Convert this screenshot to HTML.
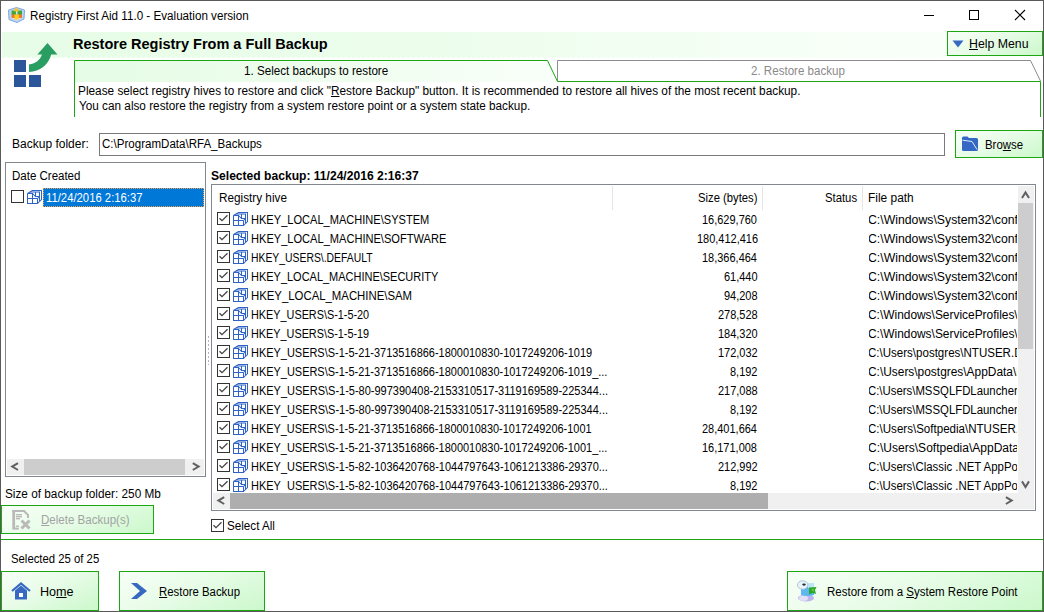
<!DOCTYPE html><html><head><meta charset="utf-8"><style>body{margin:0;width:1044px;height:612px;overflow:hidden;background:#fff;position:relative;font-family:"Liberation Sans",sans-serif}u{text-decoration:underline}</style></head><body><div style="position:absolute;left:0;top:0;width:1042px;height:610px;border:1px solid #5A5A5A"></div><svg style="position:absolute;left:8px;top:7px" width="17" height="16" viewBox="0 0 17 16">
<path d="M8.5,0.5 L16.5,3 L16,12 L9,15.5 L1,12.5 L0.5,3 Z" fill="#BBD4F4" stroke="#7FA6E0" stroke-width="1"/>
<path d="M3,4 L8.5,2 L14,4 L13.5,11 L9,13.5 L3.5,11 Z" fill="#D6E6FA"/>
<rect x="3.5" y="3.5" width="4.5" height="4.5" fill="#3FA63A"/><rect x="9.5" y="3.5" width="4.5" height="4.5" fill="#3FA63A"/>
<rect x="6.5" y="1.5" width="4" height="3" fill="#F7C22A"/>
<rect x="3.5" y="7.5" width="10.5" height="3.5" fill="#F0782A"/>
<rect x="6.5" y="7.5" width="4.5" height="5" fill="#FFCC22"/></svg><div style="position:absolute;left:924px;top:15px;width:10px;height:1px;background:#000;"></div><div style="position:absolute;left:969px;top:10px;width:8px;height:8px;border:1px solid #000"></div><svg style="position:absolute;left:1014px;top:9px" width="12" height="12" viewBox="0 0 12 12"><path d="M1,1 L11,11 M11,1 L1,11" stroke="#000" stroke-width="1.1"/></svg><div style="position:absolute;left:2px;top:32px;width:1041px;height:25px;background:linear-gradient(90deg,#E7FDE7 0%,#ECFDEC 40%,#F6FFF6 75%,#FBFFFB 100%);"></div><div style="position:absolute;left:2px;top:57px;width:1041px;height:1px;background:repeating-linear-gradient(90deg,rgba(255,255,255,0) 0 3px,#fff 3px 5px),linear-gradient(90deg,#E7FDE7 0%,#ECFDEC 40%,#F6FFF6 75%,#FBFFFB 100%);"></div><svg style="position:absolute;left:0;top:30px" width="70" height="70" viewBox="0 30 70 70">
<rect x="14" y="60" width="12" height="12" fill="#2B579A"/><rect x="14" y="75" width="12" height="12" fill="#2B579A"/><rect x="29" y="75" width="12" height="12" fill="#2B579A"/>
<path d="M29,64.4 C35,64 40,60.5 42,54.6 L37.4,54.6 L47.5,43 L57.5,54.6 L51.2,54.6 C48.5,65 40,71.5 29,72 Z" fill="#2A9E62"/></svg><div style="position:absolute;left:947px;top:31px;width:94px;height:23px;border:1px solid #1CA712;background:linear-gradient(155deg,#F7FFF7 0%,#E8FCE8 45%,#CBF8CB 100%);"></div><svg style="position:absolute;left:952px;top:40px" width="12" height="8" viewBox="0 0 12 8"><path d="M0.5,0.5 L11.5,0.5 L6,7.5 Z" fill="#3869C2"/></svg><svg style="position:absolute;left:0;top:0" width="600" height="90" viewBox="0 0 600 90"><defs><linearGradient id="tg" x1="75" y1="0" x2="557" y2="0" gradientUnits="userSpaceOnUse"><stop offset="0" stop-color="#E5FCE5"/><stop offset="0.5" stop-color="#EEFDEE"/><stop offset="1" stop-color="#F9FFF9"/></linearGradient></defs><path d="M75,61 H547.5 L557.5,82 H75 Z" fill="url(#tg)"/></svg><svg style="position:absolute;left:0;top:0" width="1044" height="130" viewBox="0 0 1044 130">
<path d="M557.5,81 V60.5 H1030.5 L1040.5,81" fill="none" stroke="#8C8C8C" stroke-width="1"/>
<path d="M74.5,117 V60.5 H547.5 L557.5,81.5 H1040.5 V117" fill="none" stroke="#1CA712" stroke-width="1"/></svg><div style="position:absolute;left:99px;top:133px;width:844px;height:21px;border:1px solid #7A7A7A;background:#fff;"></div><div style="position:absolute;left:955px;top:130px;width:86px;height:26px;border:1px solid #1CA712;background:linear-gradient(155deg,#F7FFF7 0%,#E8FCE8 45%,#CBF8CB 100%);"></div><svg style="position:absolute;left:961px;top:136px" width="18" height="16" viewBox="0 0 18 16">
<path d="M1,2 Q1,0.5 2.5,0.5 L6.5,0.5 L8,2 L15.5,2 Q17,2 17,3.5 L17,13.5 Q17,15 15.5,15 L2.5,15 Q1,15 1,13.5 Z" fill="#3568C4"/>
<path d="M1.5,4.2 L11,5.5 L16,13.5" fill="none" stroke="#DDE8F8" stroke-width="1"/></svg><div style="position:absolute;left:5px;top:162px;width:199px;height:313px;border:1px solid #828790;background:#fff;"></div><div style="position:absolute;left:11px;top:190px;width:11px;height:11px;border:1px solid #333;background:#fff"></div><svg style="position:absolute;left:27px;top:190px" width="16" height="15" viewBox="0 0 16 15"><g fill="none" stroke="#2E62C4" stroke-width="1.05">
<path d="M0.5,3.5 V13.5 H10.5 V8.5 M0.5,3.5 H5.5 V13.5 M0.5,8.5 H10.5 M0.5,3.5 L5.5,0.5 H14.5 V9.5 L10.5,13.5"/>
<path d="M3.2,2 H12.5 V11 M8.5,2 V6.5 H13 M5.5,3.5 L8.5,6.5 M10.5,8.5 L12.5,6.5"/></g></svg><div style="position:absolute;left:43px;top:188px;width:161px;height:19px;background:#0078D7;"></div><div style="position:absolute;left:43px;top:188px;width:159px;height:17px;border:1px dotted #F5A04A"></div><div style="position:absolute;left:7px;top:459px;width:197px;height:16px;background:#F0F0F0;"></div><div style="position:absolute;left:24px;top:459px;width:161px;height:16px;background:#CDCDCD;"></div><div style="position:absolute;left:211px;top:184px;width:823px;height:325px;border:1px solid #828790;background:#fff;"></div><div style="position:absolute;left:612px;top:186px;width:1px;height:24px;background:#E5E5E5;"></div><div style="position:absolute;left:762px;top:186px;width:1px;height:24px;background:#E5E5E5;"></div><div style="position:absolute;left:862px;top:186px;width:1px;height:24px;background:#E5E5E5;"></div><div style="position:absolute;left:1018px;top:186px;width:16px;height:307px;background:#F0F0F0;"></div><div style="position:absolute;left:1018px;top:203px;width:15px;height:146px;background:#CDCDCD;"></div><div style="position:absolute;left:213px;top:493px;width:821px;height:16px;background:#F0F0F0;"></div><div style="position:absolute;left:230px;top:493px;width:538px;height:16px;background:#AEAEAE;"></div><svg style="position:absolute;left:0;top:0" width="1044" height="612" viewBox="0 0 1044 612"><g fill="none" stroke="#606060" stroke-width="2" stroke-linejoin="miter">
<path d="M18,463.2 L12.2,466.6 L18,470"/><path d="M192.8,463.2 L198.6,466.6 L192.8,470"/>
<path d="M224.2,497.2 L218.4,500.6 L224.2,504"/><path d="M1005.9,497.2 L1011.7,500.6 L1005.9,504"/>
<path d="M1022,198 L1025.5,192.4 L1029,198"/><path d="M1022,481.4 L1025.5,487 L1029,481.4"/></g></svg><div style="position:absolute;left:217px;top:212px;width:11px;height:11px;border:1px solid #333;background:#fff"></div><svg style="position:absolute;left:217px;top:212px" width="13" height="13" viewBox="0 0 13 13"><path d="M2.5,6.2 L5,8.7 L10.5,3.2" fill="none" stroke="#444" stroke-width="1.3"/></svg><svg style="position:absolute;left:233px;top:212px" width="16" height="15" viewBox="0 0 16 15"><g fill="none" stroke="#2E62C4" stroke-width="1.05">
<path d="M0.5,3.5 V13.5 H10.5 V8.5 M0.5,3.5 H5.5 V13.5 M0.5,8.5 H10.5 M0.5,3.5 L5.5,0.5 H14.5 V9.5 L10.5,13.5"/>
<path d="M3.2,2 H12.5 V11 M8.5,2 V6.5 H13 M5.5,3.5 L8.5,6.5 M10.5,8.5 L12.5,6.5"/></g></svg><div style="position:absolute;left:217px;top:231px;width:11px;height:11px;border:1px solid #333;background:#fff"></div><svg style="position:absolute;left:217px;top:231px" width="13" height="13" viewBox="0 0 13 13"><path d="M2.5,6.2 L5,8.7 L10.5,3.2" fill="none" stroke="#444" stroke-width="1.3"/></svg><svg style="position:absolute;left:233px;top:231px" width="16" height="15" viewBox="0 0 16 15"><g fill="none" stroke="#2E62C4" stroke-width="1.05">
<path d="M0.5,3.5 V13.5 H10.5 V8.5 M0.5,3.5 H5.5 V13.5 M0.5,8.5 H10.5 M0.5,3.5 L5.5,0.5 H14.5 V9.5 L10.5,13.5"/>
<path d="M3.2,2 H12.5 V11 M8.5,2 V6.5 H13 M5.5,3.5 L8.5,6.5 M10.5,8.5 L12.5,6.5"/></g></svg><div style="position:absolute;left:217px;top:250px;width:11px;height:11px;border:1px solid #333;background:#fff"></div><svg style="position:absolute;left:217px;top:250px" width="13" height="13" viewBox="0 0 13 13"><path d="M2.5,6.2 L5,8.7 L10.5,3.2" fill="none" stroke="#444" stroke-width="1.3"/></svg><svg style="position:absolute;left:233px;top:250px" width="16" height="15" viewBox="0 0 16 15"><g fill="none" stroke="#2E62C4" stroke-width="1.05">
<path d="M0.5,3.5 V13.5 H10.5 V8.5 M0.5,3.5 H5.5 V13.5 M0.5,8.5 H10.5 M0.5,3.5 L5.5,0.5 H14.5 V9.5 L10.5,13.5"/>
<path d="M3.2,2 H12.5 V11 M8.5,2 V6.5 H13 M5.5,3.5 L8.5,6.5 M10.5,8.5 L12.5,6.5"/></g></svg><div style="position:absolute;left:217px;top:269px;width:11px;height:11px;border:1px solid #333;background:#fff"></div><svg style="position:absolute;left:217px;top:269px" width="13" height="13" viewBox="0 0 13 13"><path d="M2.5,6.2 L5,8.7 L10.5,3.2" fill="none" stroke="#444" stroke-width="1.3"/></svg><svg style="position:absolute;left:233px;top:269px" width="16" height="15" viewBox="0 0 16 15"><g fill="none" stroke="#2E62C4" stroke-width="1.05">
<path d="M0.5,3.5 V13.5 H10.5 V8.5 M0.5,3.5 H5.5 V13.5 M0.5,8.5 H10.5 M0.5,3.5 L5.5,0.5 H14.5 V9.5 L10.5,13.5"/>
<path d="M3.2,2 H12.5 V11 M8.5,2 V6.5 H13 M5.5,3.5 L8.5,6.5 M10.5,8.5 L12.5,6.5"/></g></svg><div style="position:absolute;left:217px;top:288px;width:11px;height:11px;border:1px solid #333;background:#fff"></div><svg style="position:absolute;left:217px;top:288px" width="13" height="13" viewBox="0 0 13 13"><path d="M2.5,6.2 L5,8.7 L10.5,3.2" fill="none" stroke="#444" stroke-width="1.3"/></svg><svg style="position:absolute;left:233px;top:288px" width="16" height="15" viewBox="0 0 16 15"><g fill="none" stroke="#2E62C4" stroke-width="1.05">
<path d="M0.5,3.5 V13.5 H10.5 V8.5 M0.5,3.5 H5.5 V13.5 M0.5,8.5 H10.5 M0.5,3.5 L5.5,0.5 H14.5 V9.5 L10.5,13.5"/>
<path d="M3.2,2 H12.5 V11 M8.5,2 V6.5 H13 M5.5,3.5 L8.5,6.5 M10.5,8.5 L12.5,6.5"/></g></svg><div style="position:absolute;left:217px;top:307px;width:11px;height:11px;border:1px solid #333;background:#fff"></div><svg style="position:absolute;left:217px;top:307px" width="13" height="13" viewBox="0 0 13 13"><path d="M2.5,6.2 L5,8.7 L10.5,3.2" fill="none" stroke="#444" stroke-width="1.3"/></svg><svg style="position:absolute;left:233px;top:307px" width="16" height="15" viewBox="0 0 16 15"><g fill="none" stroke="#2E62C4" stroke-width="1.05">
<path d="M0.5,3.5 V13.5 H10.5 V8.5 M0.5,3.5 H5.5 V13.5 M0.5,8.5 H10.5 M0.5,3.5 L5.5,0.5 H14.5 V9.5 L10.5,13.5"/>
<path d="M3.2,2 H12.5 V11 M8.5,2 V6.5 H13 M5.5,3.5 L8.5,6.5 M10.5,8.5 L12.5,6.5"/></g></svg><div style="position:absolute;left:217px;top:326px;width:11px;height:11px;border:1px solid #333;background:#fff"></div><svg style="position:absolute;left:217px;top:326px" width="13" height="13" viewBox="0 0 13 13"><path d="M2.5,6.2 L5,8.7 L10.5,3.2" fill="none" stroke="#444" stroke-width="1.3"/></svg><svg style="position:absolute;left:233px;top:326px" width="16" height="15" viewBox="0 0 16 15"><g fill="none" stroke="#2E62C4" stroke-width="1.05">
<path d="M0.5,3.5 V13.5 H10.5 V8.5 M0.5,3.5 H5.5 V13.5 M0.5,8.5 H10.5 M0.5,3.5 L5.5,0.5 H14.5 V9.5 L10.5,13.5"/>
<path d="M3.2,2 H12.5 V11 M8.5,2 V6.5 H13 M5.5,3.5 L8.5,6.5 M10.5,8.5 L12.5,6.5"/></g></svg><div style="position:absolute;left:217px;top:345px;width:11px;height:11px;border:1px solid #333;background:#fff"></div><svg style="position:absolute;left:217px;top:345px" width="13" height="13" viewBox="0 0 13 13"><path d="M2.5,6.2 L5,8.7 L10.5,3.2" fill="none" stroke="#444" stroke-width="1.3"/></svg><svg style="position:absolute;left:233px;top:345px" width="16" height="15" viewBox="0 0 16 15"><g fill="none" stroke="#2E62C4" stroke-width="1.05">
<path d="M0.5,3.5 V13.5 H10.5 V8.5 M0.5,3.5 H5.5 V13.5 M0.5,8.5 H10.5 M0.5,3.5 L5.5,0.5 H14.5 V9.5 L10.5,13.5"/>
<path d="M3.2,2 H12.5 V11 M8.5,2 V6.5 H13 M5.5,3.5 L8.5,6.5 M10.5,8.5 L12.5,6.5"/></g></svg><div style="position:absolute;left:217px;top:364px;width:11px;height:11px;border:1px solid #333;background:#fff"></div><svg style="position:absolute;left:217px;top:364px" width="13" height="13" viewBox="0 0 13 13"><path d="M2.5,6.2 L5,8.7 L10.5,3.2" fill="none" stroke="#444" stroke-width="1.3"/></svg><svg style="position:absolute;left:233px;top:364px" width="16" height="15" viewBox="0 0 16 15"><g fill="none" stroke="#2E62C4" stroke-width="1.05">
<path d="M0.5,3.5 V13.5 H10.5 V8.5 M0.5,3.5 H5.5 V13.5 M0.5,8.5 H10.5 M0.5,3.5 L5.5,0.5 H14.5 V9.5 L10.5,13.5"/>
<path d="M3.2,2 H12.5 V11 M8.5,2 V6.5 H13 M5.5,3.5 L8.5,6.5 M10.5,8.5 L12.5,6.5"/></g></svg><div style="position:absolute;left:217px;top:383px;width:11px;height:11px;border:1px solid #333;background:#fff"></div><svg style="position:absolute;left:217px;top:383px" width="13" height="13" viewBox="0 0 13 13"><path d="M2.5,6.2 L5,8.7 L10.5,3.2" fill="none" stroke="#444" stroke-width="1.3"/></svg><svg style="position:absolute;left:233px;top:383px" width="16" height="15" viewBox="0 0 16 15"><g fill="none" stroke="#2E62C4" stroke-width="1.05">
<path d="M0.5,3.5 V13.5 H10.5 V8.5 M0.5,3.5 H5.5 V13.5 M0.5,8.5 H10.5 M0.5,3.5 L5.5,0.5 H14.5 V9.5 L10.5,13.5"/>
<path d="M3.2,2 H12.5 V11 M8.5,2 V6.5 H13 M5.5,3.5 L8.5,6.5 M10.5,8.5 L12.5,6.5"/></g></svg><div style="position:absolute;left:217px;top:402px;width:11px;height:11px;border:1px solid #333;background:#fff"></div><svg style="position:absolute;left:217px;top:402px" width="13" height="13" viewBox="0 0 13 13"><path d="M2.5,6.2 L5,8.7 L10.5,3.2" fill="none" stroke="#444" stroke-width="1.3"/></svg><svg style="position:absolute;left:233px;top:402px" width="16" height="15" viewBox="0 0 16 15"><g fill="none" stroke="#2E62C4" stroke-width="1.05">
<path d="M0.5,3.5 V13.5 H10.5 V8.5 M0.5,3.5 H5.5 V13.5 M0.5,8.5 H10.5 M0.5,3.5 L5.5,0.5 H14.5 V9.5 L10.5,13.5"/>
<path d="M3.2,2 H12.5 V11 M8.5,2 V6.5 H13 M5.5,3.5 L8.5,6.5 M10.5,8.5 L12.5,6.5"/></g></svg><div style="position:absolute;left:217px;top:421px;width:11px;height:11px;border:1px solid #333;background:#fff"></div><svg style="position:absolute;left:217px;top:421px" width="13" height="13" viewBox="0 0 13 13"><path d="M2.5,6.2 L5,8.7 L10.5,3.2" fill="none" stroke="#444" stroke-width="1.3"/></svg><svg style="position:absolute;left:233px;top:421px" width="16" height="15" viewBox="0 0 16 15"><g fill="none" stroke="#2E62C4" stroke-width="1.05">
<path d="M0.5,3.5 V13.5 H10.5 V8.5 M0.5,3.5 H5.5 V13.5 M0.5,8.5 H10.5 M0.5,3.5 L5.5,0.5 H14.5 V9.5 L10.5,13.5"/>
<path d="M3.2,2 H12.5 V11 M8.5,2 V6.5 H13 M5.5,3.5 L8.5,6.5 M10.5,8.5 L12.5,6.5"/></g></svg><div style="position:absolute;left:217px;top:440px;width:11px;height:11px;border:1px solid #333;background:#fff"></div><svg style="position:absolute;left:217px;top:440px" width="13" height="13" viewBox="0 0 13 13"><path d="M2.5,6.2 L5,8.7 L10.5,3.2" fill="none" stroke="#444" stroke-width="1.3"/></svg><svg style="position:absolute;left:233px;top:440px" width="16" height="15" viewBox="0 0 16 15"><g fill="none" stroke="#2E62C4" stroke-width="1.05">
<path d="M0.5,3.5 V13.5 H10.5 V8.5 M0.5,3.5 H5.5 V13.5 M0.5,8.5 H10.5 M0.5,3.5 L5.5,0.5 H14.5 V9.5 L10.5,13.5"/>
<path d="M3.2,2 H12.5 V11 M8.5,2 V6.5 H13 M5.5,3.5 L8.5,6.5 M10.5,8.5 L12.5,6.5"/></g></svg><div style="position:absolute;left:217px;top:459px;width:11px;height:11px;border:1px solid #333;background:#fff"></div><svg style="position:absolute;left:217px;top:459px" width="13" height="13" viewBox="0 0 13 13"><path d="M2.5,6.2 L5,8.7 L10.5,3.2" fill="none" stroke="#444" stroke-width="1.3"/></svg><svg style="position:absolute;left:233px;top:459px" width="16" height="15" viewBox="0 0 16 15"><g fill="none" stroke="#2E62C4" stroke-width="1.05">
<path d="M0.5,3.5 V13.5 H10.5 V8.5 M0.5,3.5 H5.5 V13.5 M0.5,8.5 H10.5 M0.5,3.5 L5.5,0.5 H14.5 V9.5 L10.5,13.5"/>
<path d="M3.2,2 H12.5 V11 M8.5,2 V6.5 H13 M5.5,3.5 L8.5,6.5 M10.5,8.5 L12.5,6.5"/></g></svg><div style="position:absolute;left:217px;top:478px;width:11px;height:11px;border:1px solid #333;background:#fff"></div><svg style="position:absolute;left:217px;top:478px" width="13" height="13" viewBox="0 0 13 13"><path d="M2.5,6.2 L5,8.7 L10.5,3.2" fill="none" stroke="#444" stroke-width="1.3"/></svg><svg style="position:absolute;left:233px;top:478px" width="16" height="15" viewBox="0 0 16 15"><g fill="none" stroke="#2E62C4" stroke-width="1.05">
<path d="M0.5,3.5 V13.5 H10.5 V8.5 M0.5,3.5 H5.5 V13.5 M0.5,8.5 H10.5 M0.5,3.5 L5.5,0.5 H14.5 V9.5 L10.5,13.5"/>
<path d="M3.2,2 H12.5 V11 M8.5,2 V6.5 H13 M5.5,3.5 L8.5,6.5 M10.5,8.5 L12.5,6.5"/></g></svg><div style="position:absolute;left:208px;top:336px;width:1px;height:29px;background:repeating-linear-gradient(180deg,#B4B4B4 0 2px,transparent 2px 4px);"></div><div style="position:absolute;left:211px;top:519px;width:11px;height:11px;border:1px solid #333;background:#fff"></div><svg style="position:absolute;left:211px;top:519px" width="13" height="13" viewBox="0 0 13 13"><path d="M2.5,6.2 L5,8.7 L10.5,3.2" fill="none" stroke="#444" stroke-width="1.3"/></svg><div style="position:absolute;left:1px;top:505px;width:151px;height:27px;border:1px solid #1CA712;background:linear-gradient(155deg,#F7FFF7 0%,#E8FCE8 45%,#CBF8CB 100%);"></div><svg style="position:absolute;left:6px;top:506px" width="28" height="28" viewBox="0 0 28 28">
<g fill="#B9B9B9"><rect x="6.3" y="4" width="2.8" height="19.6"/><rect x="6.3" y="4" width="12.5" height="2"/><rect x="9" y="21.6" width="3.8" height="2"/>
<rect x="10" y="8" width="6" height="1.4"/><rect x="10" y="10" width="6" height="1.4"/><rect x="10" y="12" width="4" height="1.4"/><rect x="10" y="19.5" width="3" height="1.4"/></g>
<path d="M18,5 L22,9 V12" fill="none" stroke="#B9B9B9" stroke-width="2"/>
<path d="M15.5,14.5 L23.5,22.5 M23.5,14.5 L15.5,22.5" stroke="#B9B9B9" stroke-width="3"/></svg><div style="position:absolute;left:1px;top:539px;width:1042px;height:1px;background:#1CA712;"></div><div style="position:absolute;left:1px;top:571px;width:96px;height:38px;border:1px solid #1CA712;background:linear-gradient(155deg,#F7FFF7 0%,#E8FCE8 45%,#CBF8CB 100%);"></div><svg style="position:absolute;left:11px;top:582px" width="20" height="18" viewBox="0 0 20 18">
<path d="M1,9 L10,1.5 L19,9" fill="none" stroke="#3869C2" stroke-width="2.2"/><path d="M4,8.5 L10,3.5 L16,8.5 V17.5 H4 Z" fill="#3869C2"/><rect x="8" y="11" width="4" height="4" fill="#fff"/></svg><div style="position:absolute;left:119px;top:571px;width:144px;height:38px;border:1px solid #1CA712;background:linear-gradient(155deg,#F7FFF7 0%,#E8FCE8 45%,#CBF8CB 100%);"></div><svg style="position:absolute;left:130px;top:582px" width="18" height="18" viewBox="0 0 18 18"><path d="M1,1 L7,1 L17,9 L7,17 L1,17 L10,9 Z" fill="#3869C2"/></svg><div style="position:absolute;left:787px;top:571px;width:254px;height:38px;border:1px solid #1CA712;background:linear-gradient(155deg,#F7FFF7 0%,#E8FCE8 45%,#CBF8CB 100%);"></div><svg style="position:absolute;left:794px;top:577px" width="28" height="28" viewBox="0 0 28 28">
<ellipse cx="12" cy="21" rx="8" ry="3.6" fill="#BDB6EC"/><ellipse cx="9.5" cy="21.2" rx="4.5" ry="2.6" fill="#E2E0F6"/>
<path d="M7,9 H20 V18 Q14,20 7,18 Z" fill="#5DB8F2"/><rect x="14" y="6" width="6" height="5" fill="#BDE8FB"/>
<ellipse cx="8.7" cy="8" rx="5.2" ry="4.2" fill="#E6F5FC" stroke="#A9BCCC" stroke-width="0.9"/>
<ellipse cx="10" cy="7.6" rx="1.8" ry="1.1" fill="#2A2A2A"/>
<path d="M15,10.5 L22.5,10 L21,13 L22,17 L18.5,16 L15,17.5 Z" fill="#2FA82A"/><path d="M17,12 L20,12 L19.5,15 Z" fill="#5CD04A"/></svg><div style="position:absolute;left:30.03px;top:6px;font-size:12px;font-weight:normal;color:#000;line-height:20px;white-space:pre;transform:scaleX(0.9710);transform-origin:0 0">Registry First Aid 11.0 - Evaluation version</div><div style="position:absolute;left:72.96px;top:34px;font-size:14px;font-weight:bold;color:#000;line-height:20px;white-space:pre;transform:scaleX(1.0357);transform-origin:0 0">Restore Registry From a Full Backup</div><div style="position:absolute;left:968.50px;top:34px;font-size:12px;font-weight:normal;color:#000;line-height:20px;white-space:pre;transform:scaleX(1.0263);transform-origin:0 0"><u>H</u>elp Menu</div><div style="position:absolute;left:243.73px;top:61px;font-size:12px;font-weight:normal;color:#000;line-height:20px;white-space:pre;transform:scaleX(0.9694);transform-origin:0 0">1. Select backups to restore</div><div style="position:absolute;left:751.14px;top:61px;font-size:12px;font-weight:normal;color:#8A8A8A;line-height:20px;white-space:pre;transform:scaleX(0.9646);transform-origin:0 0">2. Restore backup</div><div style="position:absolute;left:77.72px;top:81px;font-size:12px;font-weight:normal;color:#000;line-height:20px;white-space:pre;transform:scaleX(0.9840);transform-origin:0 0">Please select registry hives to restore and click "<u>R</u>estore Backup" button. It is recommended to restore all hives of the most recent backup.</div><div style="position:absolute;left:78.70px;top:96px;font-size:12px;font-weight:normal;color:#000;line-height:20px;white-space:pre;transform:scaleX(0.9800);transform-origin:0 0">You can also restore the registry from a system restore point or a system state backup.</div><div style="position:absolute;left:12.40px;top:134px;font-size:12px;font-weight:normal;color:#000;line-height:20px;white-space:pre;transform:scaleX(1.0013);transform-origin:0 0">Backup folder:</div><div style="position:absolute;left:102.04px;top:134px;font-size:12px;font-weight:normal;color:#000;line-height:20px;white-space:pre;transform:scaleX(0.9624);transform-origin:0 0">C:\ProgramData\RFA_Backups</div><div style="position:absolute;left:984.75px;top:135px;font-size:12px;font-weight:normal;color:#000;line-height:20px;white-space:pre;transform:scaleX(0.9513);transform-origin:0 0">Bro<u>w</u>se</div><div style="position:absolute;left:12.44px;top:166px;font-size:12px;font-weight:normal;color:#000;line-height:20px;white-space:pre;transform:scaleX(0.9586);transform-origin:0 0">Date Created</div><div style="position:absolute;left:45.66px;top:188px;font-size:12px;font-weight:normal;color:#fff;line-height:20px;white-space:pre;transform:scaleX(0.9416);transform-origin:0 0">11/24/2016 2:16:37</div><div style="position:absolute;left:210.99px;top:166px;font-size:12px;font-weight:bold;color:#000;line-height:20px;white-space:pre;transform:scaleX(1.0073);transform-origin:0 0">Selected backup: 11/24/2016 2:16:37</div><div style="position:absolute;left:218.62px;top:188px;font-size:12px;font-weight:normal;color:#000;line-height:20px;white-space:pre;transform:scaleX(0.9794);transform-origin:0 0">Registry hive</div><div style="position:absolute;left:697.56px;top:188px;font-size:12px;font-weight:normal;color:#000;line-height:20px;white-space:pre;transform:scaleX(0.9387);transform-origin:0 0">Size (bytes)</div><div style="position:absolute;left:824.66px;top:188px;font-size:12px;font-weight:normal;color:#000;line-height:20px;white-space:pre;transform:scaleX(0.9424);transform-origin:0 0">Status</div><div style="position:absolute;left:868.31px;top:188px;font-size:12px;font-weight:normal;color:#000;line-height:20px;white-space:pre;transform:scaleX(0.9932);transform-origin:0 0">File path</div><div style="position:absolute;left:4.62px;top:484px;font-size:12px;font-weight:normal;color:#000;line-height:20px;white-space:pre;transform:scaleX(0.9815);transform-origin:0 0">Size of backup folder: 250 Mb</div><div style="position:absolute;left:41.10px;top:510px;font-size:12px;font-weight:normal;color:#A3A3A3;line-height:20px;white-space:pre;transform:scaleX(0.9615);transform-origin:0 0"><u>D</u>elete Backup(s)</div><div style="position:absolute;left:226.83px;top:516px;font-size:12px;font-weight:normal;color:#000;line-height:20px;white-space:pre;transform:scaleX(0.9708);transform-origin:0 0">Select All</div><div style="position:absolute;left:10.76px;top:549px;font-size:12px;font-weight:normal;color:#000;line-height:20px;white-space:pre;transform:scaleX(0.9446);transform-origin:0 0">Selected 25 of 25</div><div style="position:absolute;left:40.45px;top:582px;font-size:12px;font-weight:normal;color:#000;line-height:20px;white-space:pre;transform:scaleX(1.0484);transform-origin:0 0">Ho<u>m</u>e</div><div style="position:absolute;left:159.20px;top:582px;font-size:12px;font-weight:normal;color:#000;line-height:20px;white-space:pre;transform:scaleX(0.9482);transform-origin:0 0"><u>R</u>estore Backup</div><div style="position:absolute;left:826.94px;top:582px;font-size:12px;font-weight:normal;color:#000;line-height:20px;white-space:pre;transform:scaleX(0.9586);transform-origin:0 0">Restore from a <u>S</u>ystem Restore Point</div><div style="position:absolute;left:0;top:0;width:1044px;height:612px;clip-path:inset(185px 0 121px 0)"><div style="position:absolute;left:250.58px;top:210px;font-size:12px;font-weight:normal;color:#000;line-height:20px;white-space:pre;transform:scaleX(0.9219);transform-origin:0 0">HKEY_LOCAL_MACHINE\SYSTEM</div><div style="position:absolute;left:702.10px;top:210px;font-size:12px;font-weight:normal;color:#000;line-height:20px;white-space:pre;transform:scaleX(0.9150);transform-origin:0 0">16,629,760</div><div style="position:absolute;left:869px;top:210px;width:148px;height:20px;overflow:hidden"><div style="position:absolute;left:-0.72px;top:0px;font-size:12px;font-weight:normal;color:#000;line-height:20px;white-space:pre;transform:scaleX(1.0219);transform-origin:0 0">C:\Windows\System32\config\SYSTEM</div></div><div style="position:absolute;left:250.58px;top:229px;font-size:12px;font-weight:normal;color:#000;line-height:20px;white-space:pre;transform:scaleX(0.9229);transform-origin:0 0">HKEY_LOCAL_MACHINE\SOFTWARE</div><div style="position:absolute;left:696.61px;top:229px;font-size:12px;font-weight:normal;color:#000;line-height:20px;white-space:pre;transform:scaleX(0.9150);transform-origin:0 0">180,412,416</div><div style="position:absolute;left:869px;top:229px;width:148px;height:20px;overflow:hidden"><div style="position:absolute;left:-0.72px;top:0px;font-size:12px;font-weight:normal;color:#000;line-height:20px;white-space:pre;transform:scaleX(1.0219);transform-origin:0 0">C:\Windows\System32\config\SOFTWARE</div></div><div style="position:absolute;left:250.63px;top:248px;font-size:12px;font-weight:normal;color:#000;line-height:20px;white-space:pre;transform:scaleX(0.8650);transform-origin:0 0">HKEY_USERS\.DEFAULT</div><div style="position:absolute;left:702.10px;top:248px;font-size:12px;font-weight:normal;color:#000;line-height:20px;white-space:pre;transform:scaleX(0.9150);transform-origin:0 0">18,366,464</div><div style="position:absolute;left:869px;top:248px;width:148px;height:20px;overflow:hidden"><div style="position:absolute;left:-0.72px;top:0px;font-size:12px;font-weight:normal;color:#000;line-height:20px;white-space:pre;transform:scaleX(1.0219);transform-origin:0 0">C:\Windows\System32\config\DEFAULT</div></div><div style="position:absolute;left:250.59px;top:267px;font-size:12px;font-weight:normal;color:#000;line-height:20px;white-space:pre;transform:scaleX(0.9148);transform-origin:0 0">HKEY_LOCAL_MACHINE\SECURITY</div><div style="position:absolute;left:724.06px;top:267px;font-size:12px;font-weight:normal;color:#000;line-height:20px;white-space:pre;transform:scaleX(0.9150);transform-origin:0 0">61,440</div><div style="position:absolute;left:869px;top:267px;width:148px;height:20px;overflow:hidden"><div style="position:absolute;left:-0.72px;top:0px;font-size:12px;font-weight:normal;color:#000;line-height:20px;white-space:pre;transform:scaleX(1.0219);transform-origin:0 0">C:\Windows\System32\config\SECURITY</div></div><div style="position:absolute;left:250.55px;top:286px;font-size:12px;font-weight:normal;color:#000;line-height:20px;white-space:pre;transform:scaleX(0.9470);transform-origin:0 0">HKEY_LOCAL_MACHINE\SAM</div><div style="position:absolute;left:724.06px;top:286px;font-size:12px;font-weight:normal;color:#000;line-height:20px;white-space:pre;transform:scaleX(0.9150);transform-origin:0 0">94,208</div><div style="position:absolute;left:869px;top:286px;width:148px;height:20px;overflow:hidden"><div style="position:absolute;left:-0.72px;top:0px;font-size:12px;font-weight:normal;color:#000;line-height:20px;white-space:pre;transform:scaleX(1.0219);transform-origin:0 0">C:\Windows\System32\config\SAM</div></div><div style="position:absolute;left:250.60px;top:305px;font-size:12px;font-weight:normal;color:#000;line-height:20px;white-space:pre;transform:scaleX(0.9039);transform-origin:0 0">HKEY_USERS\S-1-5-20</div><div style="position:absolute;left:717.66px;top:305px;font-size:12px;font-weight:normal;color:#000;line-height:20px;white-space:pre;transform:scaleX(0.9150);transform-origin:0 0">278,528</div><div style="position:absolute;left:869px;top:305px;width:148px;height:20px;overflow:hidden"><div style="position:absolute;left:-0.69px;top:0px;font-size:12px;font-weight:normal;color:#000;line-height:20px;white-space:pre;transform:scaleX(0.9932);transform-origin:0 0">C:\Windows\ServiceProfiles\NetworkService</div></div><div style="position:absolute;left:250.60px;top:324px;font-size:12px;font-weight:normal;color:#000;line-height:20px;white-space:pre;transform:scaleX(0.9039);transform-origin:0 0">HKEY_USERS\S-1-5-19</div><div style="position:absolute;left:717.66px;top:324px;font-size:12px;font-weight:normal;color:#000;line-height:20px;white-space:pre;transform:scaleX(0.9150);transform-origin:0 0">184,320</div><div style="position:absolute;left:869px;top:324px;width:148px;height:20px;overflow:hidden"><div style="position:absolute;left:-0.69px;top:0px;font-size:12px;font-weight:normal;color:#000;line-height:20px;white-space:pre;transform:scaleX(0.9932);transform-origin:0 0">C:\Windows\ServiceProfiles\LocalService</div></div><div style="position:absolute;left:250.59px;top:343px;font-size:12px;font-weight:normal;color:#000;line-height:20px;white-space:pre;transform:scaleX(0.9129);transform-origin:0 0">HKEY_USERS\S-1-5-21-3713516866-1800010830-1017249206-1019</div><div style="position:absolute;left:717.66px;top:343px;font-size:12px;font-weight:normal;color:#000;line-height:20px;white-space:pre;transform:scaleX(0.9150);transform-origin:0 0">172,032</div><div style="position:absolute;left:869px;top:343px;width:148px;height:20px;overflow:hidden"><div style="position:absolute;left:-0.66px;top:0px;font-size:12px;font-weight:normal;color:#000;line-height:20px;white-space:pre;transform:scaleX(0.9613);transform-origin:0 0">C:\Users\postgres\NTUSER.DAT</div></div><div style="position:absolute;left:250.59px;top:362px;font-size:12px;font-weight:normal;color:#000;line-height:20px;white-space:pre;transform:scaleX(0.9131);transform-origin:0 0">HKEY_USERS\S-1-5-21-3713516866-1800010830-1017249206-1019_...</div><div style="position:absolute;left:729.55px;top:362px;font-size:12px;font-weight:normal;color:#000;line-height:20px;white-space:pre;transform:scaleX(0.9150);transform-origin:0 0">8,192</div><div style="position:absolute;left:869px;top:362px;width:148px;height:20px;overflow:hidden"><div style="position:absolute;left:-0.69px;top:0px;font-size:12px;font-weight:normal;color:#000;line-height:20px;white-space:pre;transform:scaleX(0.9924);transform-origin:0 0">C:\Users\postgres\AppData\Local</div></div><div style="position:absolute;left:250.58px;top:381px;font-size:12px;font-weight:normal;color:#000;line-height:20px;white-space:pre;transform:scaleX(0.9168);transform-origin:0 0">HKEY_USERS\S-1-5-80-997390408-2153310517-3119169589-225344...</div><div style="position:absolute;left:717.66px;top:381px;font-size:12px;font-weight:normal;color:#000;line-height:20px;white-space:pre;transform:scaleX(0.9150);transform-origin:0 0">217,088</div><div style="position:absolute;left:869px;top:381px;width:148px;height:20px;overflow:hidden"><div style="position:absolute;left:-0.65px;top:0px;font-size:12px;font-weight:normal;color:#000;line-height:20px;white-space:pre;transform:scaleX(0.9477);transform-origin:0 0">C:\Users\MSSQLFDLauncher\NTUSER</div></div><div style="position:absolute;left:250.58px;top:400px;font-size:12px;font-weight:normal;color:#000;line-height:20px;white-space:pre;transform:scaleX(0.9168);transform-origin:0 0">HKEY_USERS\S-1-5-80-997390408-2153310517-3119169589-225344...</div><div style="position:absolute;left:729.55px;top:400px;font-size:12px;font-weight:normal;color:#000;line-height:20px;white-space:pre;transform:scaleX(0.9150);transform-origin:0 0">8,192</div><div style="position:absolute;left:869px;top:400px;width:148px;height:20px;overflow:hidden"><div style="position:absolute;left:-0.65px;top:0px;font-size:12px;font-weight:normal;color:#000;line-height:20px;white-space:pre;transform:scaleX(0.9477);transform-origin:0 0">C:\Users\MSSQLFDLauncher\AppData</div></div><div style="position:absolute;left:250.59px;top:419px;font-size:12px;font-weight:normal;color:#000;line-height:20px;white-space:pre;transform:scaleX(0.9116);transform-origin:0 0">HKEY_USERS\S-1-5-21-3713516866-1800010830-1017249206-1001</div><div style="position:absolute;left:702.10px;top:419px;font-size:12px;font-weight:normal;color:#000;line-height:20px;white-space:pre;transform:scaleX(0.9150);transform-origin:0 0">28,401,664</div><div style="position:absolute;left:869px;top:419px;width:148px;height:20px;overflow:hidden"><div style="position:absolute;left:-0.66px;top:0px;font-size:12px;font-weight:normal;color:#000;line-height:20px;white-space:pre;transform:scaleX(0.9632);transform-origin:0 0">C:\Users\Softpedia\NTUSER.DAT</div></div><div style="position:absolute;left:250.59px;top:438px;font-size:12px;font-weight:normal;color:#000;line-height:20px;white-space:pre;transform:scaleX(0.9131);transform-origin:0 0">HKEY_USERS\S-1-5-21-3713516866-1800010830-1017249206-1001_...</div><div style="position:absolute;left:702.10px;top:438px;font-size:12px;font-weight:normal;color:#000;line-height:20px;white-space:pre;transform:scaleX(0.9150);transform-origin:0 0">16,171,008</div><div style="position:absolute;left:869px;top:438px;width:148px;height:20px;overflow:hidden"><div style="position:absolute;left:-0.70px;top:0px;font-size:12px;font-weight:normal;color:#000;line-height:20px;white-space:pre;transform:scaleX(1.0021);transform-origin:0 0">C:\Users\Softpedia\AppData\Local</div></div><div style="position:absolute;left:250.59px;top:457px;font-size:12px;font-weight:normal;color:#000;line-height:20px;white-space:pre;transform:scaleX(0.9144);transform-origin:0 0">HKEY_USERS\S-1-5-82-1036420768-1044797643-1061213386-29370...</div><div style="position:absolute;left:717.66px;top:457px;font-size:12px;font-weight:normal;color:#000;line-height:20px;white-space:pre;transform:scaleX(0.9150);transform-origin:0 0">212,992</div><div style="position:absolute;left:869px;top:457px;width:148px;height:20px;overflow:hidden"><div style="position:absolute;left:-0.65px;top:0px;font-size:12px;font-weight:normal;color:#000;line-height:20px;white-space:pre;transform:scaleX(0.9493);transform-origin:0 0">C:\Users\Classic .NET AppPool\NTUSER</div></div><div style="position:absolute;left:250.59px;top:476px;font-size:12px;font-weight:normal;color:#000;line-height:20px;white-space:pre;transform:scaleX(0.9144);transform-origin:0 0">HKEY_USERS\S-1-5-82-1036420768-1044797643-1061213386-29370...</div><div style="position:absolute;left:729.55px;top:476px;font-size:12px;font-weight:normal;color:#000;line-height:20px;white-space:pre;transform:scaleX(0.9150);transform-origin:0 0">8,192</div><div style="position:absolute;left:869px;top:476px;width:148px;height:20px;overflow:hidden"><div style="position:absolute;left:-0.65px;top:0px;font-size:12px;font-weight:normal;color:#000;line-height:20px;white-space:pre;transform:scaleX(0.9493);transform-origin:0 0">C:\Users\Classic .NET AppPool\AppData</div></div></div></body></html>
